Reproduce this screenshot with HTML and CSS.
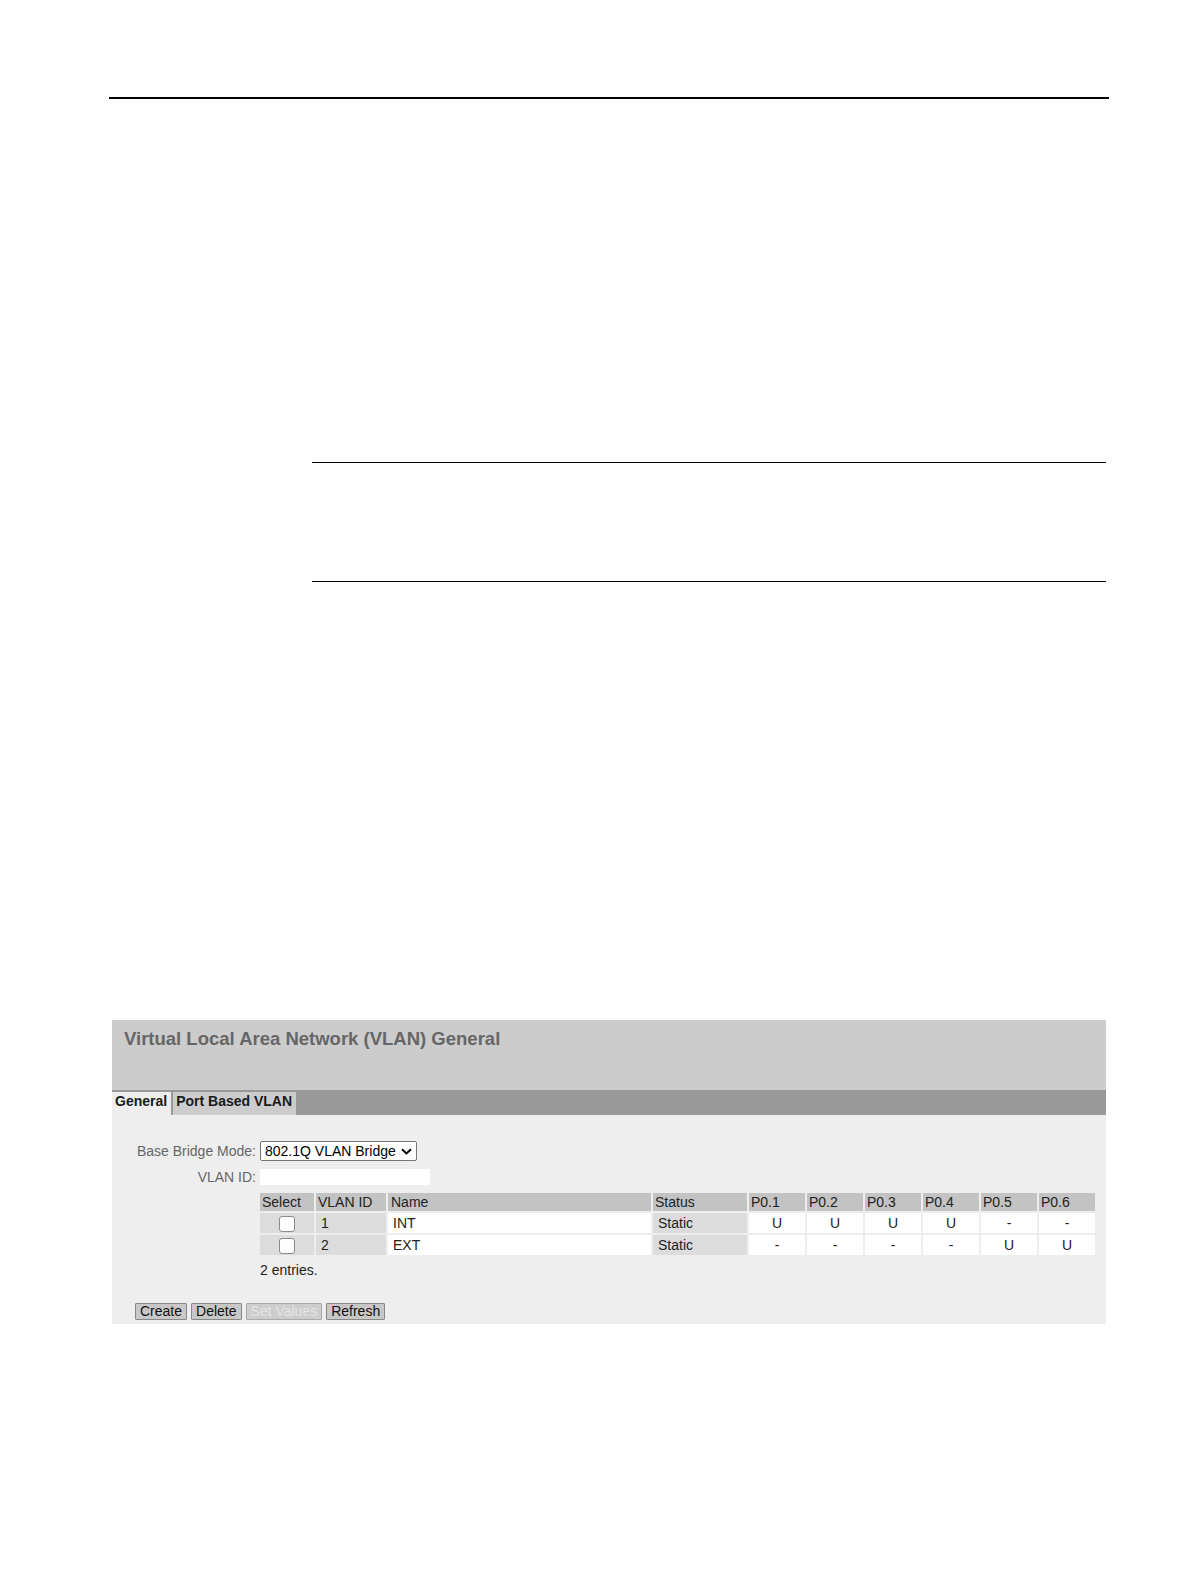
FILE: index.html
```html
<!DOCTYPE html>
<html>
<head>
<meta charset="utf-8">
<title>VLAN General</title>
<link rel="stylesheet" href="styles.css">
</head>
<body>
<div class="page">
  <div class="header-rule"></div>
  <div class="note"></div>
  <div class="shot">
    <div class="shot-title">Virtual Local Area Network (VLAN) General</div>
    <div class="tabbar">
      <div class="tab active">General</div>
      <div class="tab">Port Based VLAN</div>
    </div>
    <div class="content">
      <div class="form">
        <label class="lbl">Base Bridge Mode:</label>
        <div class="select"><span>802.1Q VLAN Bridge</span><svg class="chev" width="11" height="7" viewBox="0 0 11 7"><path d="M1 1.2 L5.5 5.4 L10 1.2" fill="none" stroke="#000" stroke-width="2"/></svg></div>
        <label class="lbl">VLAN ID:</label>
        <div class="input"></div>
      </div>
      <div class="tablewrap">
        <table class="vlan">
          <colgroup>
            <col class="w-sel"><col class="w-id"><col class="w-name"><col class="w-status">
            <col class="w-p"><col class="w-p"><col class="w-p"><col class="w-p"><col class="w-p"><col class="w-p">
          </colgroup>
          <thead>
            <tr>
              <th>Select</th>
              <th>VLAN ID</th>
              <th class="pad3">Name</th>
              <th>Status</th>
              <th>P0.1</th>
              <th>P0.2</th>
              <th>P0.3</th>
              <th>P0.4</th>
              <th>P0.5</th>
              <th>P0.6</th>
            </tr>
          </thead>
          <tbody>
            <tr>
              <td class="gray center"><span class="cb"></span></td>
              <td class="gray">1</td>
              <td class="white">INT</td>
              <td class="gray">Static</td>
              <td class="white center">U</td>
              <td class="white center">U</td>
              <td class="white center">U</td>
              <td class="white center">U</td>
              <td class="white center">-</td>
              <td class="white center">-</td>
            </tr>
            <tr>
              <td class="gray center"><span class="cb"></span></td>
              <td class="gray">2</td>
              <td class="white">EXT</td>
              <td class="gray">Static</td>
              <td class="white center">-</td>
              <td class="white center">-</td>
              <td class="white center">-</td>
              <td class="white center">-</td>
              <td class="white center">U</td>
              <td class="white center">U</td>
            </tr>
          </tbody>
        </table>
        <div class="entries">2 entries.</div>
      </div>
      <div class="buttons">
        <button class="btn">Create</button>
        <button class="btn">Delete</button>
        <button class="btn disabled">Set Values</button>
        <button class="btn">Refresh</button>
      </div>
    </div>
  </div>
</div>
</body>
</html>
```

FILE: styles.css
```css
html, body {
  margin: 0;
  padding: 0;
  background: #ffffff;
}
body {
  font-family: "Liberation Sans", Arial, sans-serif;
  color: #000;
}
.page {
  width: 1000px;
  margin-left: 109px;
  padding-top: 97px;
  padding-bottom: 200px;
}
.header-rule {
  height: 0;
  border-top: 2px solid #000;
}
.note {
  margin-top: 363px;
  margin-left: 203px;
  margin-right: 3px;
  height: 118px;
  border-top: 1.5px solid #000;
  border-bottom: 1.5px solid #000;
}
.shot {
  margin-top: 438px;
  margin-left: 3px;
  width: 994px;
  background: #eeeeee;
}
.shot-title {
  background: #cccccc;
  height: 70px;
  box-sizing: border-box;
  padding: 8px 0 0 12px;
  font-size: 18.5px;
  font-weight: bold;
  color: #666666;
}
.tabbar {
  background: #999999;
  height: 25px;
  display: flex;
  align-items: flex-end;
  gap: 2px;
}
.tab {
  height: 23px;
  box-sizing: border-box;
  padding: 1px 4px 0 3px;
  font-size: 14px;
  font-weight: bold;
  color: #1a1a1a;
  background: #cccccc;
}
.tab.active {
  background: #eeeeee;
}
.content {
  padding: 26px 0 4px 0;
}
.form {
  display: grid;
  grid-template-columns: 144px auto;
  column-gap: 4px;
  row-gap: 8px;
  align-items: center;
  justify-items: start;
}
.lbl {
  justify-self: end;
  font-size: 14px;
  color: #666666;
}
.select {
  height: 20px;
  box-sizing: border-box;
  width: 157px;
  border: 1px solid #767676;
  border-radius: 2px;
  background: #fff;
  display: flex;
  align-items: center;
  justify-content: space-between;
  padding: 0 4px 0 4px;
  font-size: 14px;
}
.chev {
  display: block;
}
.input {
  width: 170px;
  height: 16px;
  background: #fff;
}
.tablewrap {
  margin-left: 148px;
  margin-top: 8px;
}
.vlan {
  border-collapse: separate;
  border-spacing: 2px;
  table-layout: fixed;
  width: 839px;
  margin: -2px 0 0 -2px;
  font-size: 14px;
}
.w-sel { width: 54px; }
.w-id { width: 70px; }
.w-name { width: 263px; }
.w-status { width: 94px; }
.w-p { width: 56px; }
.vlan th {
  background: #c3c3c3;
  font-weight: normal;
  text-align: left;
  height: 18px;
  padding: 0 2px;
  color: #222222;
}
.vlan th.pad3 { padding-left: 3px; }
.vlan td {
  height: 20px;
  padding: 0 4px 0 5px;
  color: #222222;
}
.vlan td.gray { background: #dcdcdc; }
.vlan td.white { background: #ffffff; }
.vlan td.center { text-align: center; padding-left: 0; padding-right: 0; }
.cb {
  display: inline-block;
  width: 14px;
  height: 14px;
  border: 1px solid #8a8a8a;
  border-radius: 3px;
  background: #fff;
  vertical-align: middle;
}
.entries {
  margin-top: 5px;
  font-size: 14px;
  color: #222222;
}
.buttons {
  margin-top: 25px;
  margin-left: 23px;
  display: flex;
  gap: 4px;
}
.btn {
  font-family: "Liberation Sans", Arial, sans-serif;
  font-size: 14px;
  height: 17px;
  padding: 0 4px;
  background: #c8c8c8;
  border: 1px solid #888888;
  border-radius: 1px;
  color: #111;
  line-height: 15px;
}
.btn.disabled {
  color: #e4e4e4;
  background: #cdcdcd;
  border-color: #aaaaaa;
}
```
